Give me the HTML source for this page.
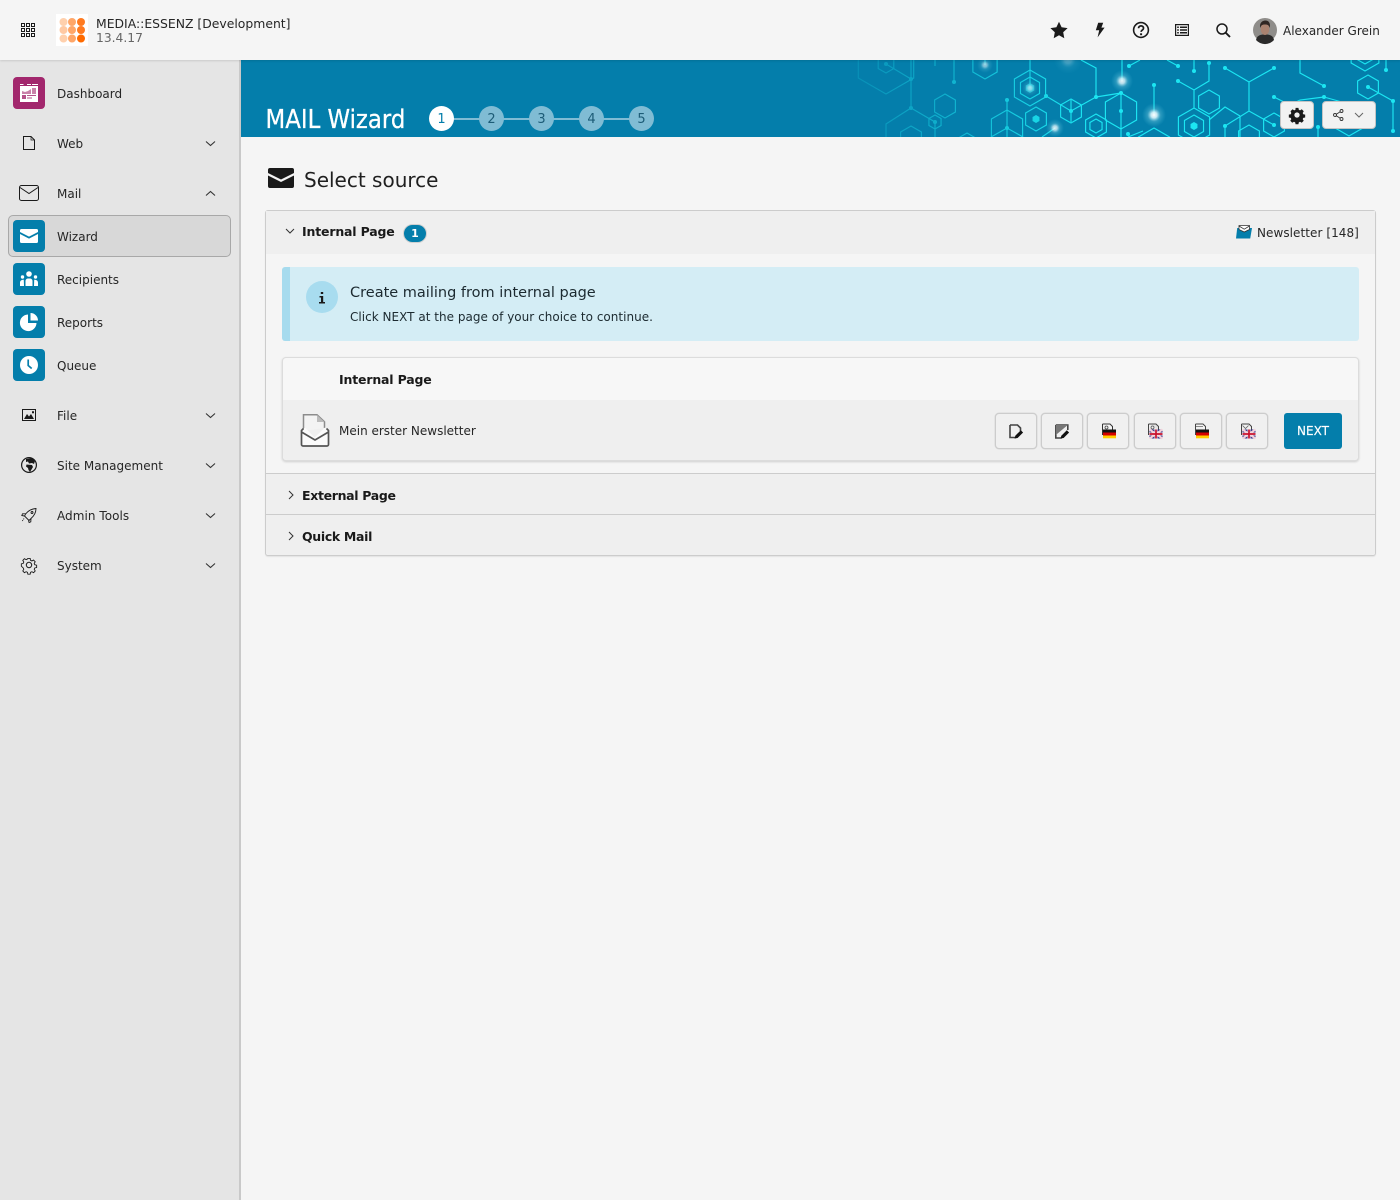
<!DOCTYPE html>
<html lang="en"><head><meta charset="utf-8"><title>MAIL Wizard</title>
<style>
*{box-sizing:border-box}
html,body{margin:0;padding:0}
body{width:1400px;height:1200px;position:relative;overflow:hidden;background:#f5f5f5;font:12px/16px "DejaVu Sans","Liberation Sans",sans-serif;color:#1a1a1a}
.a{position:absolute;white-space:nowrap}
.t{position:absolute;white-space:nowrap;line-height:16px}
svg{position:absolute;display:block;overflow:visible}
.ib{position:absolute;left:13px;width:32px;height:32px;border-radius:4px;background:#047eab}
.nav{left:57px;color:#262626}
.step{position:absolute;top:106px;width:25px;height:25px;border-radius:50%;background:#80bcd4;color:#1d5c77;text-align:center;font-size:13px;line-height:27px}
.btn{position:absolute;top:412.500px;width:42px;height:36px;background:#f0f0f0;border:1px solid #ccc;border-radius:4px;box-shadow:0 0 0 .5px #d8d8d8}
</style></head><body>

<!-- sidebar -->
<div class="a" style="left:0;top:60px;width:241px;height:1140px;background:#e5e5e5;border-right:2px solid #c9c9c9"></div>
<!-- topbar -->
<div class="a" style="left:0;top:0;width:1400px;height:60px;background:#f5f5f5;box-shadow:0 1px 2px rgba(0,0,0,.12);z-index:2"></div>

<div style="position:absolute;left:0;top:0;width:1400px;height:60px;z-index:3">
<svg style="left:21px;top:23px" width="14" height="14" viewBox="0 0 14 14" fill="none" stroke="#1a1a1a" stroke-width="1">
<path d="M.5.5h3v3h-3zM5.5.5h3v3h-3zM10.5.5h3v3h-3zM.5 5.5h3v3h-3zM5.5 5.5h3v3h-3zM10.5 5.5h3v3h-3zM.5 10.5h3v3h-3zM5.5 10.5h3v3h-3zM10.5 10.5h3v3h-3z"/></svg>
<svg style="left:56px;top:14px" width="32" height="32" viewBox="0 0 32 32">
<rect width="32" height="32" fill="#fff"/>
<g fill="#ffd0ad"><circle cx="7.5" cy="8" r="4"/><circle cx="7.5" cy="16" r="4" fill="#ffc9a3"/><circle cx="7.5" cy="24.5" r="4"/></g>
<g fill="#ffa668"><circle cx="16" cy="8" r="4"/><circle cx="16" cy="16" r="4"/><circle cx="16" cy="24.5" r="4"/></g>
<g fill="#ff7a20"><circle cx="25" cy="8" r="4"/><circle cx="25" cy="16" r="4"/><circle cx="25" cy="24.5" r="4" fill="#ff6a00"/></g></svg>
<div class="t" style="left:96px;top:16px;color:#262626;font-size:12.400px">MEDIA::ESSENZ [Development]</div>
<div class="t" style="left:96px;top:30px;color:#666;font-size:12.300px">13.4.17</div>

<svg style="left:1050px;top:21px" width="18" height="18" viewBox="0 0 18 18"><path fill="#1a1a1a" d="M9 .8l2.6 5.5 6 .8-4.4 4.1 1.1 6L9 14.3l-5.3 2.9 1.1-6L.4 7.1l6-.8z"/></svg>
<svg style="left:1094px;top:22px" width="12" height="16" viewBox="0 0 12 16"><path fill="#1a1a1a" d="M4.2.8h5L7.4 5.6h3.2L3.6 15.4l1.6-7.2H1.8z"/></svg>
<svg style="left:1132px;top:21px" width="18" height="18" viewBox="0 0 18 18" fill="none" stroke="#1a1a1a"><circle cx="9" cy="9" r="7.4" stroke-width="1.6"/><path d="M6.6 7.2c0-3.1 4.9-3.1 4.9 0 0 1.9-2.4 1.9-2.4 3.7" stroke-width="1.7"/><path d="M8.1 12.3h2v1.9h-2z" fill="#1a1a1a" stroke="none"/></svg>
<svg style="left:1175px;top:24px" width="14" height="12" viewBox="0 0 14 12" fill="none" stroke="#1a1a1a"><rect x=".6" y=".6" width="12.8" height="10.8" stroke-width="1.2"/><path d="M2.2 3.2h1.6M5 3.2h7M2.2 6h1.6M5 6h7M2.2 8.8h1.6M5 8.8h7" stroke-width="1.5"/></svg>
<svg style="left:1216px;top:23px" width="15" height="15" viewBox="0 0 15 15" fill="none" stroke="#1a1a1a"><circle cx="6" cy="6" r="5" stroke-width="1.5"/><path d="M9.8 9.8l4.2 4.2" stroke-width="1.9"/></svg>
<svg style="left:1253px;top:18px" width="24" height="24" viewBox="0 0 24 24">
<circle cx="12" cy="12" r="12" fill="#8f8d8a"/><path d="M3 22c1-5 5-5.500 9-5.500s8 .5 9 5.500a12 12 0 0 1-18 0z" fill="#2b2a2a"/>
<ellipse cx="12" cy="11" rx="4.300" ry="6" fill="#a98270"/><path d="M7.200 10c-1-6 3-7.500 5.300-7.500s5.300 1.500 4.300 7.500c-1-3-2-3.500-4.800-3.500s-3.800.5-4.800 3.500z" fill="#2f2623"/></svg>
<div class="t" style="left:1283px;top:23px;color:#262626">Alexander Grein</div>
</div>

<!-- sidebar items -->
<div class="a" style="left:8px;top:215px;width:223px;height:42px;background:#d8d8d8;border:1px solid #a8a8a8;border-radius:5px"></div>

<div class="ib" style="top:77px;background:#a2276d"></div>
<svg style="left:20px;top:84px" width="18" height="18" viewBox="0 0 18 18"><path fill="#fff" d="M0 0h3.500v1H0zM7 0h4v1H7zM12 0h6v1h-6zM0 2h18v16H0z"/><path fill="#c981a9" d="M12 4h4v6h-4zM2 7l3 1 3-1 3-2v5H2z"/><path fill="#a2276d" d="M2 11h4v4H2zM7 11h9v1H7zM7 13.500h5v1H7z" opacity=".8"/></svg>
<div class="t nav" style="top:86px">Dashboard</div>

<svg style="left:23px;top:136px" width="12" height="14" viewBox="0 0 12 14" fill="none" stroke="#1a1a1a" stroke-width="1"><path d="M.5.500h7.500l3.500 3.500v9.500H.5z"/><path d="M8 .500v3.500h3.500" stroke-width=".7"/></svg>
<div class="t nav" style="top:136px">Web</div>

<svg style="left:19px;top:185px" width="20" height="16" viewBox="0 0 20 16" fill="none" stroke="#1a1a1a" stroke-width="1"><rect x=".5" y=".5" width="19" height="15" rx="2"/><path d="M1 2.500l9 6 9-6"/></svg>
<div class="t nav" style="top:186px">Mail</div>

<div class="ib" style="top:220px"></div>
<svg style="left:20px;top:229px" width="18" height="14" viewBox="0 0 18 14"><path fill="#fff" d="M1.500 0h15A1.500 1.500 0 0 1 18 1.500V3L9 7.600 0 3V1.500A1.500 1.500 0 0 1 1.500 0zM0 5l9 4.600L18 5v7.500a1.500 1.500 0 0 1-1.500 1.500h-15A1.500 1.500 0 0 1 0 12.500z"/></svg>
<div class="t nav" style="top:229px">Wizard</div>

<div class="ib" style="top:263px"></div>
<svg style="left:20px;top:271px" width="18" height="16" viewBox="0 0 18 16"><g fill="#fff"><circle cx="9" cy="3" r="2.800"/><circle cx="2.500" cy="6" r="1.700"/><circle cx="15.500" cy="6" r="1.700"/><path d="M5.500 15V10a2.500 2.500 0 0 1 2.500-2.500h2a2.500 2.500 0 0 1 2.500 2.500v5zM0 15v-3c0-2 1-3.200 3.800-3.200L4 15zM18 15v-3c0-2-1-3.200-3.800-3.200L14 15z"/></g></svg>
<div class="t nav" style="top:272px">Recipients</div>

<div class="ib" style="top:306px"></div>
<svg style="left:20px;top:313px" width="18" height="18" viewBox="0 0 18 18"><path fill="#fff" d="M8 1.500v8.500h8.500A8.300 8.300 0 1 1 8 1.500zM10.500 0A7.500 7.500 0 0 1 18 7.500h-7.500z"/></svg>
<div class="t nav" style="top:315px">Reports</div>

<div class="ib" style="top:349px"></div>
<svg style="left:20px;top:356px" width="18" height="18" viewBox="0 0 18 18"><circle cx="9" cy="9" r="9" fill="#fff"/><path d="M8.200 3.500v6l3.500 3" fill="none" stroke="#047eab" stroke-width="1.700"/></svg>
<div class="t nav" style="top:358px">Queue</div>

<svg style="left:22px;top:409px" width="14" height="12" viewBox="0 0 14 12"><rect x=".5" y=".5" width="13" height="11" fill="none" stroke="#1a1a1a"/><path fill="#1a1a1a" d="M2 10l3-5 2 2.500L9 5l3 5zM10 2.200h2v2h-2z"/></svg>
<div class="t nav" style="top:408px">File</div>

<svg style="left:21px;top:457px" width="16" height="16" viewBox="0 0 16 16"><circle cx="8" cy="8" r="7.400" fill="none" stroke="#1a1a1a" stroke-width="1.200"/><path fill="#1a1a1a" d="M5 2l6-1 3 3-1 3-2-1-3 .500-1-2-2 .500zM5.500 7.500L11 8l1 2-3 5-1.500-2-.5-2-2-1.500z"/></svg>
<div class="t nav" style="top:458px">Site Management</div>

<svg style="left:21px;top:508px" width="16" height="15" viewBox="0 0 16 15" fill="none" stroke="#1a1a1a" stroke-width=".9"><path d="M5 5.500C8 2 11 .800 15 .500c0 4-1.500 7-5 10L8 12.500 3.500 8zM5.200 5.700L1.500 5.800.8 7.500l2.700.6M10 10.500l-.2 3.300-1.700.700-.6-2"/><circle cx="11" cy="4.500" r="1"/><path d="M3 10.500l-2 3" stroke-dasharray="1 1"/></svg>
<div class="t nav" style="top:508px;letter-spacing:.05px">Admin Tools</div>

<svg style="left:21px;top:557px" width="16" height="16" viewBox="0 0 16 16" fill="none" stroke="#1a1a1a" stroke-width="1"><path d="M6.700.700h2.600l.4 2.100 1.500.7 1.900-1 1.800 1.900-1.100 1.800.6 1.500 2.100.5v2.600l-2.100.5-.6 1.500 1.100 1.800-1.800 1.900-1.900-1-1.500.6-.4 2.100H6.700l-.4-2.100-1.500-.6-1.900 1-1.800-1.900 1.100-1.800-.6-1.500L-.5 9.300V6.700l2.100-.5.600-1.500-1.100-1.800 1.800-1.900 1.900 1 1.500-.7z" transform="translate(.8 .8) scale(.9)"/><circle cx="8" cy="8" r="2.700"/></svg>
<div class="t nav" style="top:558px">System</div>

<svg style="left:204.500px;top:0" width="11" height="570" viewBox="0 0 11 570" fill="none" stroke="#333" stroke-width="1.100">
<path d="M1 141.500l4.500 4 4.500-4M1 195.500l4.500-4 4.500 4M1 413.500l4.500 4 4.500-4M1 463.500l4.500 4 4.500-4M1 513.500l4.500 4 4.500-4M1 563.500l4.500 4 4.500-4"/></svg>

<!-- banner -->
<div class="a" style="left:241px;top:60px;width:1159px;height:77px;background:#047eab;overflow:hidden">
<svg style="left:-241px;top:-60px" width="1400" height="137" viewBox="0 0 1400 137">
<defs>
<polygon id="h" points="0,-1 .866,-.5 .866,.5 0,1 -.866,.5 -.866,-.5" vector-effect="non-scaling-stroke"/>
<radialGradient id="g"><stop offset="0" stop-color="#fff"/><stop offset=".25" stop-color="#e9fbff" stop-opacity=".85"/><stop offset=".55" stop-color="#8fdcec" stop-opacity=".3"/><stop offset="1" stop-color="#5fd0e8" stop-opacity="0"/></radialGradient>
<linearGradient id="f" gradientUnits="userSpaceOnUse" x1="850" y1="0" x2="1080" y2="0"><stop offset="0" stop-color="#047eab" stop-opacity=".85"/><stop offset=".55" stop-color="#047eab" stop-opacity=".4"/><stop offset="1" stop-color="#047eab" stop-opacity="0"/></linearGradient>
</defs>
<g fill="none" stroke="#1ce6f2" stroke-width="1.150">
<use href="#h" transform="translate(1030 88) scale(18)"/><use href="#h" transform="translate(1030 88) scale(11)"/>
<use href="#h" transform="translate(1071 111) scale(12)"/><use href="#h" transform="translate(1036 119) scale(12)"/>
<use href="#h" transform="translate(1096 126) scale(12)"/><use href="#h" transform="translate(1096 126) scale(7)"/>
<use href="#h" transform="translate(1121 111) scale(18)"/>
<use href="#h" transform="translate(1007 128) scale(18)"/>
<use href="#h" transform="translate(985 65) scale(14)"/>
<use href="#h" transform="translate(945 106) scale(12)"/>
<use href="#h" transform="translate(935 122) scale(7)"/>
<use href="#h" transform="translate(911 138) scale(12)"/>
<use href="#h" transform="translate(967 145) scale(12)"/>
<use href="#h" transform="translate(886 64) scale(9)"/>
<use href="#h" transform="translate(886 62) scale(32)"/>
<use href="#h" transform="translate(1209 102) scale(12)"/>
<use href="#h" transform="translate(1194 126) scale(18)"/><use href="#h" transform="translate(1194 126) scale(11)"/>
<use href="#h" transform="translate(1274 125) scale(12)"/>
<use href="#h" transform="translate(1368 87) scale(12)"/>
<use href="#h" transform="translate(1365 55) scale(16)"/><use href="#h" transform="translate(1365 55) scale(9)"/>
<use href="#h" transform="translate(1249 137) scale(12)"/>
<use href="#h" transform="translate(1154 146) scale(18)"/>
<use href="#h" transform="translate(1349 120) scale(16)"/>
<path d="M1030 60V88M1046 96L1071 111L1096 97M1096 97V68L1081 60M1096 97L1121 93M1071 100V122M1121 93V137M1007 100V137M991 137L1007 128L1023 137M985 60V65M954 60V82M935 60V66M911 60V108M886 64L911 79M911 108L935 122V137M911 108L886 124V137M1042 137L1055 128"/>
<path d="M1154 85V115M1122 60V81M1129 66L1140 60M1167 60L1178 66M1225 68L1249 82L1274 68M1249 82V111M1300 60V73L1324 86M1178 81L1194 90L1209 81V63M1194 60V71M1194 90V108M1209 120L1225 107L1240 116M1225 126L1249 111L1274 125M1225 126V137M1240 116V137M1274 97L1290 105L1300 100L1324 97M1318 127V137M1368 87L1393 101V131M1386 60V70M1324 97L1349 104M1143 131L1128 137"/>
</g>
<g fill="#1ce6f2">
<path d="M1030 83l4.300 2.500v5L1030 93l-4.300-2.500v-5z" opacity=".7"/>
<circle cx="1046" cy="96" r="2"/><circle cx="1071" cy="111" r="2"/><circle cx="1096" cy="97" r="2"/><circle cx="1121" cy="93" r="2"/><circle cx="1121" cy="111" r="2"/><circle cx="1007" cy="100" r="2"/><circle cx="1007" cy="128" r="2"/><circle cx="954" cy="82" r="2"/><circle cx="911" cy="79" r="2"/><circle cx="911" cy="108" r="2"/><circle cx="935" cy="122" r="2"/><circle cx="886" cy="64" r="2"/>
<use href="#h" transform="translate(1036 119) scale(4)"/>
<circle cx="1154" cy="85" r="2"/><circle cx="1129" cy="66" r="2"/><circle cx="1178" cy="66" r="2"/><circle cx="1225" cy="68" r="2"/><circle cx="1274" cy="68" r="2"/><circle cx="1324" cy="86" r="2"/><circle cx="1178" cy="81" r="2"/><circle cx="1209" cy="63" r="2"/><circle cx="1194" cy="71" r="2"/><circle cx="1225" cy="126" r="2"/><circle cx="1274" cy="125" r="2"/><circle cx="1274" cy="97" r="2"/><circle cx="1324" cy="97" r="2"/><circle cx="1318" cy="127" r="2"/><circle cx="1368" cy="87" r="2"/><circle cx="1393" cy="101" r="2"/><circle cx="1393" cy="131" r="2"/><circle cx="1386" cy="70" r="2"/><circle cx="1128" cy="134" r="2"/>
<use href="#h" transform="translate(1194 126) scale(4)"/>
</g>
<rect x="841" y="60" width="240" height="77" fill="url(#f)"/>
<g fill="url(#g)"><circle cx="1030" cy="88" r="8" opacity=".6"/><circle cx="985" cy="65" r="8" opacity=".6"/><circle cx="1055" cy="128" r="9" opacity=".85"/><circle cx="1122" cy="81" r="11" opacity=".9"/><circle cx="1154" cy="115" r="12"/><circle cx="1068" cy="60" r="14" opacity=".3"/></g>
</svg>
</div>
<div class="a" style="left:265.500px;top:102px;font:25.400px/34px 'DejaVu Sans Condensed','DejaVu Sans',sans-serif;font-stretch:condensed;color:#fff;-webkit-text-stroke:.25px #fff">MAIL Wizard</div>
<div class="a" style="left:451px;top:118px;width:180px;height:2px;background:#80bcd4"></div>
<div class="step" style="left:429px;background:#fff;color:#047eab">1</div>
<div class="step" style="left:479px">2</div>
<div class="step" style="left:529px">3</div>
<div class="step" style="left:579px">4</div>
<div class="step" style="left:629px">5</div>

<div class="a" style="left:1280px;top:101px;width:34px;height:28px;background:#f2f2f2;border:1px solid #c4c4c4;border-radius:4px"></div>
<svg style="left:1289px;top:106.500px" width="16" height="16" viewBox="0 0 16 16"><path fill="#1a1a1a" fill-rule="evenodd" d="M6.500.500h3l.4 2 1.300.6 1.800-1.100 2.100 2.100-1.100 1.800.6 1.300 2 .4v3l-2 .4-.6 1.300 1.100 1.800-2.100 2.100-1.800-1.100-1.300.6-.4 2h-3l-.4-2-1.300-.6-1.800 1.100-2.100-2.100 1.100-1.800-.6-1.300-2-.4v-3l2-.4.600-1.300L1.200 4.100l2.100-2.100 1.800 1.100 1.300-.6zM8 5.200a2.800 2.800 0 1 0 0 5.600 2.800 2.800 0 0 0 0-5.600z" transform="translate(.4 .4) scale(.95)"/></svg>
<div class="a" style="left:1322px;top:101px;width:54px;height:28px;background:#f2f2f2;border:1px solid #c4c4c4;border-radius:4px"></div>
<svg style="left:1333px;top:109px" width="11" height="12" viewBox="0 0 11 12" fill="none" stroke="#333" stroke-width=".9"><circle cx="2" cy="6" r="1.500"/><circle cx="8.500" cy="2" r="1.500"/><circle cx="8.500" cy="10" r="1.500"/><path d="M3.300 5.200l3.900-2.400M3.300 6.800l3.900 2.400"/></svg>
<svg style="left:1354px;top:112px" width="10" height="6" viewBox="0 0 10 6" fill="none" stroke="#666" stroke-width="1"><path d="M1 1l4 4 4-4"/></svg>

<!-- heading -->
<svg style="left:268px;top:168px" width="26" height="20" viewBox="0 0 26 20"><path fill="#1a1a1a" d="M2 0h22a2 2 0 0 1 2 2v3L13 11.500 0 5V2a2 2 0 0 1 2-2zM0 7.500l13 6.500 13-6.500V18a2 2 0 0 1-2 2H2a2 2 0 0 1-2-2z"/></svg>
<div class="a" style="left:304px;top:167px;font-size:20px;line-height:26px;color:#1f1f1f">Select source</div>

<!-- panel -->
<div class="a" style="left:265px;top:210px;width:1111px;height:346px;background:#f5f5f5;border:1px solid #ccc;border-radius:3px;box-shadow:0 1px 1px rgba(0,0,0,.08)"></div>
<div class="a" style="left:266px;top:211px;width:1109px;height:43px;background:#efefef"></div>
<svg style="left:285px;top:228px" width="10" height="6" viewBox="0 0 10 6" fill="none" stroke="#333" stroke-width="1"><path d="M1 1l4 4 4-4"/></svg>
<div class="t" style="left:302px;top:224px;font-weight:700;color:#1a1a1a;font-size:12.500px;letter-spacing:-.17px">Internal Page</div>
<div class="a" style="left:403px;top:223.500px;width:24px;height:19px;border-radius:10px;background:#047eab;border:1px solid #d0d0d0;color:#fff;font-size:11px;font-weight:700;line-height:18px;text-align:center">1</div>
<svg style="left:1236px;top:225px" width="16" height="14" viewBox="0 0 16 14"><path fill="#047eab" d="M1.200 3h14.800l-1.800 10.500H0z"/><path fill="#fff" stroke="#333" stroke-width=".8" d="M3 .5h10.500v4L8.200 7 3 4.500z"/><path d="M3 1l5.200 3.200L13.500 1" fill="none" stroke="#333" stroke-width=".8"/></svg>
<div class="t" style="left:1257px;top:225px;color:#262626;letter-spacing:.06px">Newsletter [148]</div>

<!-- alert -->
<div class="a" style="left:282px;top:267px;width:1077px;height:74px;background:#d4edf5;border-left:8px solid #a6dbee;border-radius:3px"></div>
<div class="a" style="left:306px;top:281px;width:32px;height:32px;border-radius:50%;background:#a8dcef"></div>
<svg style="left:318px;top:291px" width="8" height="13" viewBox="0 0 8 13"><path fill="#1a1a1a" d="M2.800 1h2.400v2H2.800zM1.500 5h3.700v6H7v1.500H1V11h2V6.500H1.500z"/></svg>
<div class="a" style="left:350px;top:284px;font-size:14.500px;line-height:18px;color:#1c2a30">Create mailing from internal page</div>
<div class="t" style="left:350px;top:309px;color:#1c2a30;letter-spacing:.02px">Click NEXT at the page of your choice to continue.</div>

<!-- inner -->
<div class="a" style="left:282px;top:357px;width:1077px;height:104px;background:#f7f7f7;border:1px solid #dcdcdc;border-radius:4px;box-shadow:0 1px 2px rgba(0,0,0,.16)"></div>
<div class="a" style="left:283px;top:400px;width:1075px;height:60px;background:#efefef;border-radius:0 0 4px 4px"></div>
<div class="t" style="left:339px;top:372px;font-weight:700;font-size:12.500px;letter-spacing:-.17px">Internal Page</div>
<svg style="left:300px;top:414px" width="30" height="33" viewBox="0 0 30 33"><path d="M3.500 17V.8h13.500l7.500 7V14" fill="#f3f3f3" stroke="#8c8c8c" stroke-width="1.500"/><path d="M17 1v7h7.500z" fill="#bbb"/><path d="M1.500 16.500L5 13.500l9.500 10L25 13.500l3.500 3v14a1.500 1.500 0 0 1-1.500 1.500H3a1.500 1.500 0 0 1-1.500-1.500z" fill="#fbfbfb"/><path d="M3.500 14.500L1.500 16.500V30.500A1.500 1.500 0 0 0 3 32H27a1.500 1.500 0 0 0 1.500-1.500V16.500L26.500 14.500M1.500 18L15 26 28.500 18" fill="none" stroke="#555" stroke-width="1.700" stroke-linejoin="round"/></svg>
<div class="t" style="left:339px;top:423px;color:#262626">Mein erster Newsletter</div>

<div class="btn" style="left:995px"></div><div class="btn" style="left:1041px"></div><div class="btn" style="left:1087px"></div><div class="btn" style="left:1134px"></div><div class="btn" style="left:1180px"></div><div class="btn" style="left:1226px"></div>
<div class="a" style="left:1284px;top:412.500px;width:58px;height:36px;background:#047eab;border-radius:3px;color:#fff;text-align:center;line-height:36px;font-weight:500;-webkit-text-stroke:.2px #fff">NEXT</div>

<svg style="left:1009px;top:424px" width="15" height="15" viewBox="0 0 15 15"><path d="M1 1h7.500l3 3v3M1 1v12.500h6" fill="none" stroke="#444" stroke-width="1.600"/><path d="M5.500 14.500l.8-2.800 5.500-5.500 2.300 2.300-5.500 5.500z" fill="#111"/></svg>
<svg style="left:1055px;top:424px" width="15" height="15" viewBox="0 0 15 15"><path d="M.800 1h12v5M.800 1v13h6" fill="none" stroke="#444" stroke-width="1.600"/><path d="M.800 1h12l-12 10z" fill="#777"/><path d="M5.500 14.500l.8-2.800 5.500-5.500 2.300 2.300-5.500 5.500z" fill="#111"/></svg>

<svg style="left:1101px;top:423px" width="16" height="16" viewBox="0 0 16 16"><path d="M1.500 1h7.500L11.500 3.500V7M1.500 1v11" fill="#f5f5f5" stroke="#333"/><circle cx="5.500" cy="4.500" r="1.500" fill="none" stroke="#444" stroke-width=".8"/><rect x="2" y="6.500" width="13" height="3" fill="#111"/><rect x="2" y="9.500" width="13" height="3" fill="#d40000"/><rect x="2" y="12.500" width="13" height="2.800" fill="#ffce00"/></svg>
<svg style="left:1147px;top:423px" width="16" height="16" viewBox="0 0 16 16"><path d="M1.500 1h7.500L11.500 3.500V7M1.500 1v11" fill="#e4e4e4" stroke="#444"/><circle cx="5.500" cy="4.500" r="1.500" fill="none" stroke="#555" stroke-width=".8"/><rect x="2.500" y="6.500" width="13" height="9" fill="#30308a"/><path d="M2.500 6.500l13 9M15.500 6.500l-13 9" stroke="#f2d0d8" stroke-width="2.200"/><path d="M9 6.500v9M2.500 11h13" stroke="#f4dede" stroke-width="3"/><path d="M9 6.500v9M2.500 11h13" stroke="#c8102e" stroke-width="1.700"/></svg>
<svg style="left:1194px;top:423px" width="16" height="16" viewBox="0 0 16 16"><path d="M1.500 1h7.500L11.500 3.500V7M1.500 1v11" fill="#f5f5f5" stroke="#444"/><path d="M2 3.500h7" stroke="#888"/><rect x="2" y="6.500" width="13" height="3" fill="#111"/><rect x="2" y="9.500" width="13" height="3" fill="#d40000"/><rect x="2" y="12.500" width="13" height="2.800" fill="#ffce00"/></svg>
<svg style="left:1240px;top:423px" width="16" height="16" viewBox="0 0 16 16"><path d="M1.500 1h7.500L11.500 3.500V7M1.500 1v11" fill="#f0f0f0" stroke="#444"/><path d="M2.500 2.500l3 3 3-3" fill="none" stroke="#666" stroke-width=".8"/><rect x="2.500" y="6.500" width="13" height="9" fill="#30308a"/><path d="M2.500 6.500l13 9M15.500 6.500l-13 9" stroke="#f2d0d8" stroke-width="2.200"/><path d="M9 6.500v9M2.500 11h13" stroke="#f4dede" stroke-width="3"/><path d="M9 6.500v9M2.500 11h13" stroke="#c8102e" stroke-width="1.700"/></svg>

<!-- collapsed rows -->
<div class="a" style="left:266px;top:473px;width:1109px;height:42px;background:#efefef;border-top:1px solid #ccc"></div>
<div class="a" style="left:266px;top:514px;width:1109px;height:41px;background:#efefef;border-top:1px solid #ccc;border-radius:0 0 3px 3px"></div>
<svg style="left:287.500px;top:490px" width="6" height="10" viewBox="0 0 6 10" fill="none" stroke="#333"><path d="M1 1l4 4-4 4"/></svg>
<svg style="left:287.500px;top:531px" width="6" height="10" viewBox="0 0 6 10" fill="none" stroke="#333"><path d="M1 1l4 4-4 4"/></svg>
<div class="t" style="left:302px;top:488px;font-weight:700;font-size:12.500px;letter-spacing:-.33px">External Page</div>
<div class="t" style="left:302px;top:529px;font-weight:700;font-size:12.500px;letter-spacing:-.33px">Quick Mail</div>
</body></html>
